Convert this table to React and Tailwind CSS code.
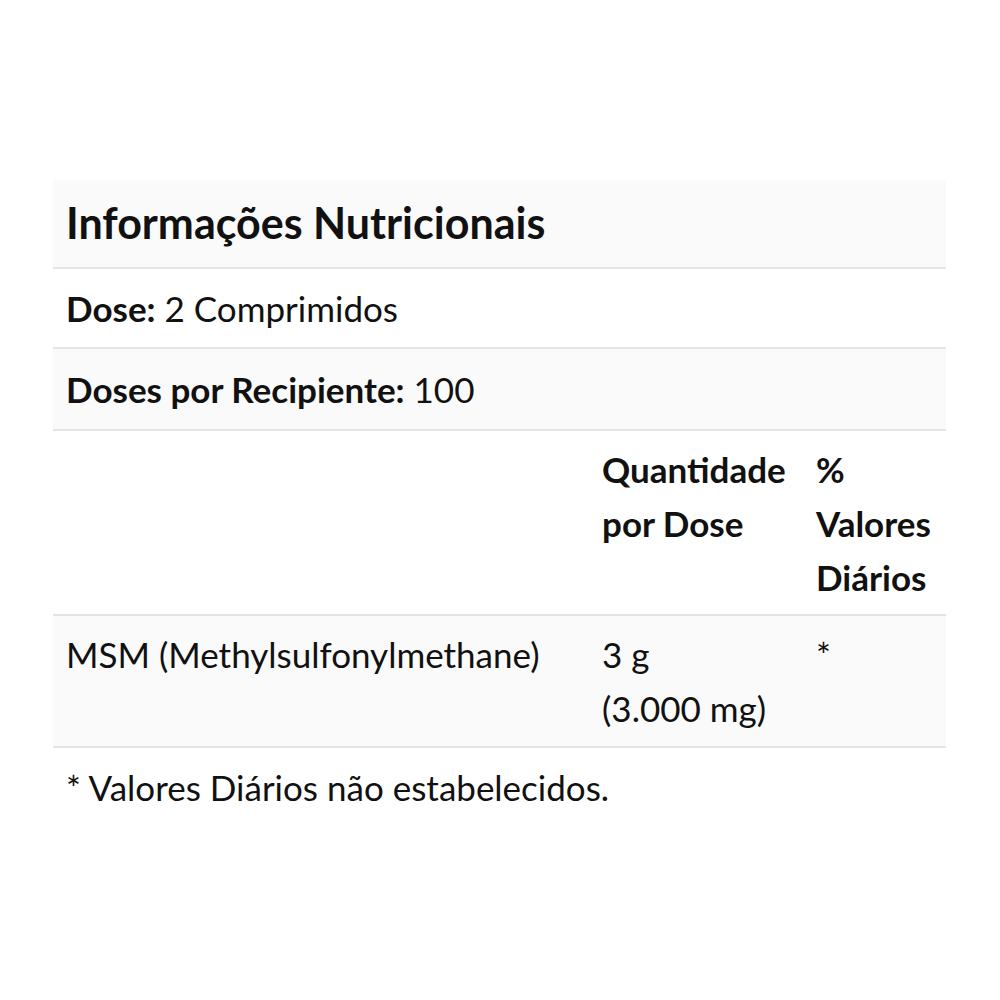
export default function App() {
  const font = { fontFamily: "Lato, 'Open Sans', sans-serif" };
  return (
    <div className="w-[1000px] h-[1000px] bg-white" style={font}>
      <div className="pt-[180px] pl-[53px] w-[947px]">
        <table className="w-[893px] border-collapse text-[35px] leading-[54px] text-[#111]">
          <tbody>
            <tr className="bg-[#fafafa] border-b-2 border-[#e4e4e4]">
              <td colSpan={3} className="px-[13px] pt-[11px] pb-[12px] text-[43px] leading-[64px] font-bold">
                Informações Nutricionais
              </td>
            </tr>
            <tr className="bg-white border-b-2 border-[#e4e4e4]">
              <td colSpan={3} className="px-[13px] py-[12px]">
                <b>Dose:</b> 2 Comprimidos
              </td>
            </tr>
            <tr className="bg-[#fafafa] border-b-2 border-[#e4e4e4]">
              <td colSpan={3} className="px-[13px] py-[13px]">
                <b>Doses por Recipiente:</b> 100
              </td>
            </tr>
            <tr className="bg-white border-b-2 border-[#e4e4e4] font-bold align-top">
              <td className="w-[536px] px-[13px] pt-[11px] pb-[10px]"></td>
              <td className="w-[214px] px-[13px] pt-[11px] pb-[10px]">Quantidade por Dose</td>
              <td className="px-[13px] pt-[11px] pb-[10px]">% Valores Diários</td>
            </tr>
            <tr className="bg-[#fafafa] border-b-2 border-[#e4e4e4] align-top">
              <td className="px-[13px] pt-[11px] pb-[11px]">MSM (Methylsulfonylmethane)</td>
              <td className="px-[13px] pt-[11px] pb-[11px]">
                3 g
                <br />
                (3.000 mg)
              </td>
              <td className="px-[13px] pt-[11px] pb-[11px]">*</td>
            </tr>
          </tbody>
        </table>
        <p className="px-[13px] pt-[12px] text-[35px] leading-[54px] text-[#111]">
          * Valores Diários não estabelecidos.
        </p>
      </div>
    </div>
  );
}
